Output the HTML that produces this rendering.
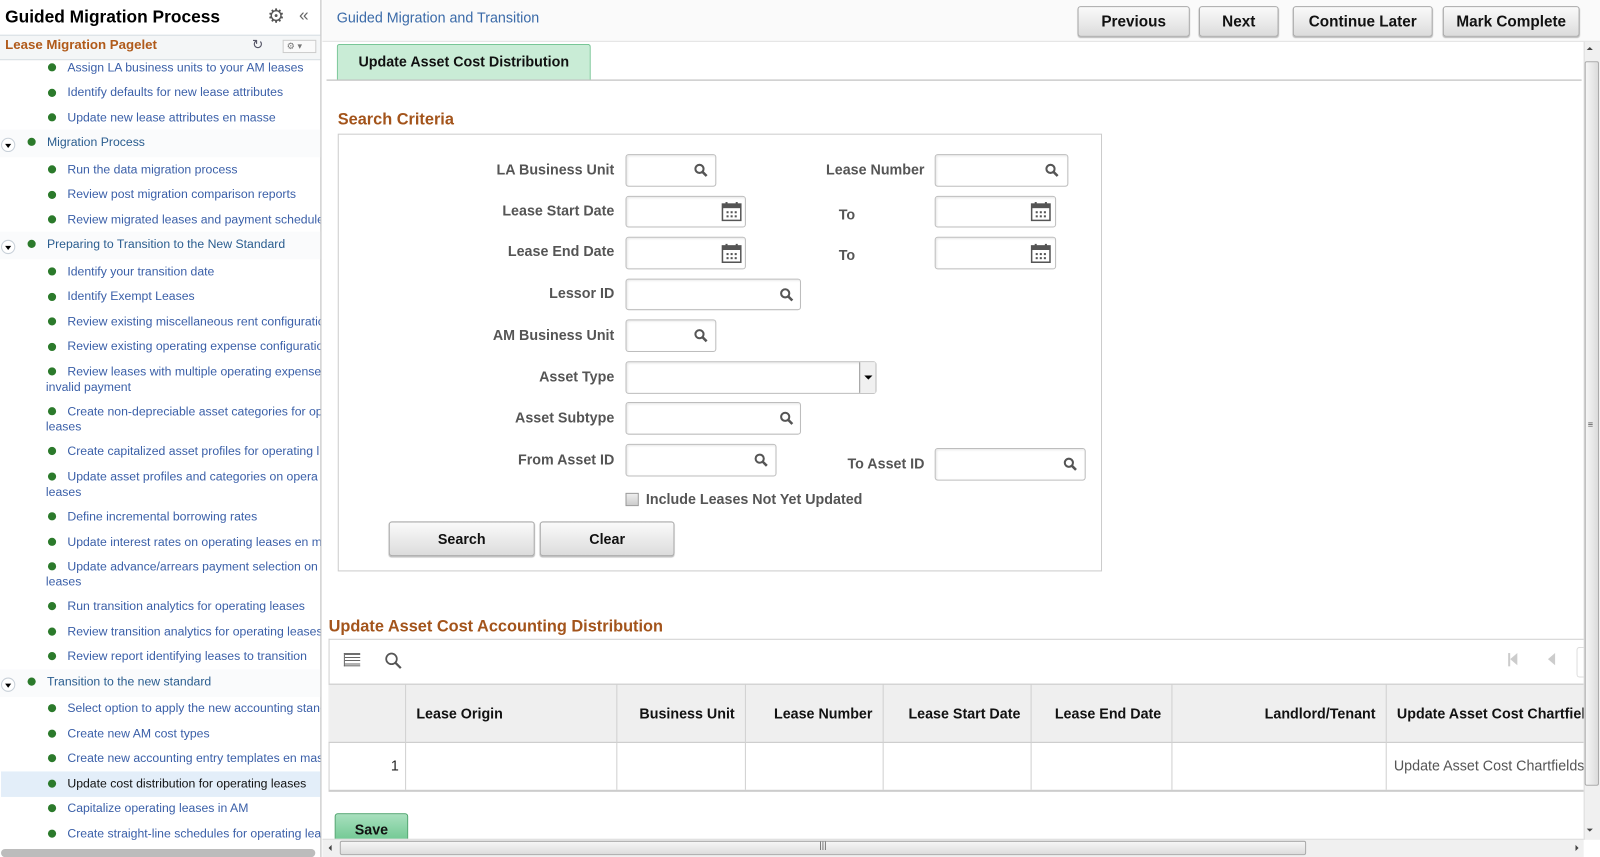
<!DOCTYPE html>
<html><head><meta charset="utf-8"><style>
*{box-sizing:border-box;margin:0;padding:0}
body{width:1600px;height:857px;overflow:hidden;background:#fff;font-family:"Liberation Sans",Arial,sans-serif;position:relative}
#w{position:absolute;left:0;top:0;width:1568px;height:840px;transform:scale(1.0204);transform-origin:0 0;overflow:hidden}
.a{position:absolute;white-space:nowrap}
.sb{position:absolute;left:0;top:0;width:315px;height:840px;border-right:1px solid #bbb;overflow:hidden;background:#fff}
.it{position:absolute;left:66px;font-size:12px;color:#3a5fa8;line-height:15px;white-space:nowrap}
.it.s{left:46px;color:#2a5d8f}
.dot{position:absolute;width:8px;height:8px;border-radius:50%;background:#2b7a2b}
.tg{position:absolute;left:1px;width:14px;height:14px;border-radius:50%;border:1px solid #c8d0d8;background:#fff}
.tg:after{content:"";position:absolute;left:3px;top:5px;border-left:3px solid transparent;border-right:3px solid transparent;border-top:4px solid #000}
.btn{position:absolute;border:1px solid #a9a9a9;border-radius:3px;background:linear-gradient(#fafafa,#dcdcdc);font-weight:bold;font-size:15px;color:#111;text-align:center;box-shadow:0 1px 1px #bbb}
.lb{position:absolute;font-weight:bold;font-size:14px;color:#555;text-align:right;white-space:nowrap}
.in{position:absolute;border:1px solid #bdbdbd;border-radius:3px;background:#fff;box-shadow:inset 1px 1px 2px #e6e6e6}
.th{position:absolute;top:671px;height:56px;line-height:56px;font-weight:bold;font-size:14px;color:#111;border-left:1px solid #d0d0d0;padding:0 10px;white-space:nowrap;overflow:hidden}
.td{position:absolute;top:727px;height:47px;border-left:1px solid #d0d0d0}
</style></head><body>
<svg width="0" height="0" style="position:absolute"><defs>
<symbol id="mg" viewBox="0 0 14 14"><circle cx="5.5" cy="5.5" r="4" fill="none" stroke="#555" stroke-width="2"/><path d="M8.5 8.5L12.5 12.5" stroke="#555" stroke-width="2.5"/></symbol>
<symbol id="cal" viewBox="0 0 20 20"><rect x="1" y="3" width="18" height="16" fill="none" stroke="#555" stroke-width="1.5"/><rect x="1" y="3" width="18" height="4" fill="#555"/><rect x="4" y="1" width="2" height="4" fill="#555"/><rect x="14" y="1" width="2" height="4" fill="#555"/><g fill="#555"><rect x="5" y="10" width="2" height="2"/><rect x="9" y="10" width="2" height="2"/><rect x="13" y="10" width="2" height="2"/><rect x="5" y="14" width="2" height="2"/><rect x="9" y="14" width="2" height="2"/><rect x="13" y="14" width="2" height="2"/></g></symbol>
</defs></svg>
<div id="w">
<div class="sb">
<div class="a" style="left:5px;top:7px;font-size:17px;font-weight:bold;color:#000">Guided Migration Process</div>
<div class="a" style="left:262px;top:5px;font-size:19px;color:#555">⚙</div>
<div class="a" style="left:293px;top:5px;font-size:17px;color:#666">«</div>
<div class="a" style="left:0;top:34px;width:314px;height:25px;background:#f4f6f7;border-top:1px solid #d6dde3;border-bottom:1px solid #d6dde3"></div>
<div class="a" style="left:5px;top:36px;font-size:13px;font-weight:bold;color:#b05a1a">Lease Migration Pagelet</div>
<div class="a" style="left:247px;top:36px;font-size:13px;color:#556">↻</div>
<div class="a" style="left:277px;top:39px;width:33px;height:13px;border:1px solid #ccc;background:#fafafa;font-size:9px;color:#777;line-height:11px;padding-left:3px">⚙ ▾</div>

<div class="dot" style="left:47px;top:62px"></div><div class="it" style="top:59px">Assign LA business units to your AM leases</div>
<div class="dot" style="left:47px;top:87px"></div><div class="it" style="top:83px">Identify defaults for new lease attributes</div>
<div class="dot" style="left:47px;top:111px"></div><div class="it" style="top:108px">Update new lease attributes en masse</div>
<div class="a" style="left:0;top:127px;width:314px;height:27px;background:#fafbfc"></div>
<div class="tg" style="top:135px"></div><div class="dot" style="left:27px;top:135px"></div><div class="it s" style="top:132px">Migration Process</div>
<div class="dot" style="left:47px;top:162px"></div><div class="it" style="top:159px">Run the data migration process</div>
<div class="dot" style="left:47px;top:187px"></div><div class="it" style="top:183px">Review post migration comparison reports</div>
<div class="dot" style="left:47px;top:211px"></div><div class="it" style="top:208px">Review migrated leases and payment schedules</div>
<div class="a" style="left:0;top:227px;width:314px;height:27px;background:#fafbfc"></div>
<div class="tg" style="top:235px"></div><div class="dot" style="left:27px;top:235px"></div><div class="it s" style="top:232px">Preparing to Transition to the New Standard</div>
<div class="dot" style="left:47px;top:262px"></div><div class="it" style="top:259px">Identify your transition date</div>
<div class="dot" style="left:47px;top:287px"></div><div class="it" style="top:283px">Identify Exempt Leases</div>
<div class="dot" style="left:47px;top:311px"></div><div class="it" style="top:308px">Review existing miscellaneous rent configuration</div>
<div class="dot" style="left:47px;top:336px"></div><div class="it" style="top:332px">Review existing operating expense configuration</div>
<div class="dot" style="left:47px;top:360px"></div><div class="it" style="top:357px">Review leases with multiple operating expenses</div><div class="it" style="left:45px;top:372px">invalid payment</div>
<div class="dot" style="left:47px;top:399px"></div><div class="it" style="top:396px">Create non-depreciable asset categories for op</div><div class="it" style="left:45px;top:411px">leases</div>
<div class="dot" style="left:47px;top:438px"></div><div class="it" style="top:435px">Create capitalized asset profiles for operating l</div>
<div class="dot" style="left:47px;top:463px"></div><div class="it" style="top:460px">Update asset profiles and categories on opera</div><div class="it" style="left:45px;top:475px">leases</div>
<div class="dot" style="left:47px;top:502px"></div><div class="it" style="top:499px">Define incremental borrowing rates</div>
<div class="dot" style="left:47px;top:527px"></div><div class="it" style="top:524px">Update interest rates on operating leases en m</div>
<div class="dot" style="left:47px;top:551px"></div><div class="it" style="top:548px">Update advance/arrears payment selection on</div><div class="it" style="left:45px;top:563px">leases</div>
<div class="dot" style="left:47px;top:590px"></div><div class="it" style="top:587px">Run transition analytics for operating leases</div>
<div class="dot" style="left:47px;top:615px"></div><div class="it" style="top:612px">Review transition analytics for operating leases</div>
<div class="dot" style="left:47px;top:639px"></div><div class="it" style="top:636px">Review report identifying leases to transition</div>
<div class="a" style="left:0;top:656px;width:314px;height:27px;background:#fafbfc"></div>
<div class="tg" style="top:664px"></div><div class="dot" style="left:27px;top:664px"></div><div class="it s" style="top:661px">Transition to the new standard</div>
<div class="dot" style="left:47px;top:690px"></div><div class="it" style="top:687px">Select option to apply the new accounting standard</div>
<div class="dot" style="left:47px;top:715px"></div><div class="it" style="top:712px">Create new AM cost types</div>
<div class="dot" style="left:47px;top:739px"></div><div class="it" style="top:736px">Create new accounting entry templates en masse</div>
<div class="a" style="left:1px;top:756px;width:313px;height:25px;background:#e3eef9"></div>
<div class="dot" style="left:47px;top:764px"></div><div class="it" style="top:761px;color:#111">Update cost distribution for operating leases</div>
<div class="dot" style="left:47px;top:788px"></div><div class="it" style="top:785px">Capitalize operating leases in AM</div>
<div class="dot" style="left:47px;top:813px"></div><div class="it" style="top:810px">Create straight-line schedules for operating leases</div>
<div class="a" style="left:1px;top:832px;width:308px;height:8px;border-radius:4px;background:#bcbcbc"></div>
</div>

<div class="a" style="left:316px;top:0;width:1252px;height:41px;background:#fafafa;border-bottom:1px solid #e2e2e2"></div>
<div class="a" style="left:330px;top:9px;font-size:14px;color:#3a6aa8">Guided Migration and Transition</div>
<div class="btn" style="left:1056px;top:6px;width:110px;height:30px;line-height:29px">Previous</div>
<div class="btn" style="left:1175px;top:6px;width:78px;height:30px;line-height:29px">Next</div>
<div class="btn" style="left:1267px;top:6px;width:137px;height:30px;line-height:29px">Continue Later</div>
<div class="btn" style="left:1414px;top:6px;width:134px;height:30px;line-height:29px">Mark Complete</div>

<div class="a" style="left:330px;top:43px;width:249px;height:35px;background:#c9ecd6;border:1px solid #6cc08d;border-bottom:none;border-radius:3px 3px 0 0;text-align:center;line-height:33px;font-weight:bold;font-size:14px;color:#111">Update Asset Cost Distribution</div>
<div class="a" style="left:320px;top:78px;width:1230px;height:1px;background:#b5b5b5"></div>

<div class="a" style="left:331px;top:109px;font-size:16px;font-weight:bold;color:#a3541b">Search Criteria</div>
<div class="a" style="left:331px;top:131px;width:749px;height:429px;border:1px solid #ccc"></div>

<div class="lb" style="right:966px;top:158px">LA Business Unit</div>
<div class="in" style="left:613px;top:151px;width:89px;height:32px"><svg class="a" style="left:66px;top:8px" width="14" height="14"><use href="#mg"/></svg></div>
<div class="lb" style="right:966px;top:198px">Lease Start Date</div>
<div class="in" style="left:613px;top:192px;width:118px;height:31px"><svg class="a" style="left:93px;top:4px" width="20" height="20"><use href="#cal"/></svg></div>
<div class="lb" style="right:966px;top:238px">Lease End Date</div>
<div class="in" style="left:613px;top:232px;width:118px;height:32px"><svg class="a" style="left:93px;top:5px" width="20" height="20"><use href="#cal"/></svg></div>
<div class="lb" style="right:966px;top:279px">Lessor ID</div>
<div class="in" style="left:613px;top:273px;width:172px;height:31px"><svg class="a" style="left:150px;top:8px" width="14" height="14"><use href="#mg"/></svg></div>
<div class="lb" style="right:966px;top:320px">AM Business Unit</div>
<div class="in" style="left:613px;top:313px;width:89px;height:32px"><svg class="a" style="left:66px;top:8px" width="14" height="14"><use href="#mg"/></svg></div>
<div class="lb" style="right:966px;top:361px">Asset Type</div>
<div class="in" style="left:613px;top:354px;width:246px;height:32px"><div class="a" style="right:0;top:0;width:16px;height:30px;border-left:1px solid #999;background:#f0f0f0"><div class="a" style="left:4px;top:13px;border-left:4px solid transparent;border-right:4px solid transparent;border-top:4px solid #000"></div></div></div>
<div class="lb" style="right:966px;top:401px">Asset Subtype</div>
<div class="in" style="left:613px;top:394px;width:172px;height:32px"><svg class="a" style="left:150px;top:8px" width="14" height="14"><use href="#mg"/></svg></div>
<div class="lb" style="right:966px;top:442px">From Asset ID</div>
<div class="in" style="left:613px;top:435px;width:148px;height:32px"><svg class="a" style="left:125px;top:8px" width="14" height="14"><use href="#mg"/></svg></div>

<div class="lb" style="right:662px;top:158px">Lease Number</div>
<div class="in" style="left:916px;top:151px;width:131px;height:32px"><svg class="a" style="left:107px;top:8px" width="14" height="14"><use href="#mg"/></svg></div>
<div class="lb" style="left:822px;top:202px">To</div>
<div class="in" style="left:916px;top:192px;width:119px;height:31px"><svg class="a" style="left:93px;top:4px" width="20" height="20"><use href="#cal"/></svg></div>
<div class="lb" style="left:822px;top:242px">To</div>
<div class="in" style="left:916px;top:232px;width:119px;height:32px"><svg class="a" style="left:93px;top:5px" width="20" height="20"><use href="#cal"/></svg></div>
<div class="lb" style="right:662px;top:446px">To Asset ID</div>
<div class="in" style="left:916px;top:439px;width:148px;height:32px"><svg class="a" style="left:125px;top:8px" width="14" height="14"><use href="#mg"/></svg></div>

<div class="a" style="left:613px;top:483px;width:13px;height:13px;border:1px solid #999;background:linear-gradient(#eee,#ccc)"></div>
<div class="lb" style="left:633px;top:481px">Include Leases Not Yet Updated</div>
<div class="btn" style="left:381px;top:511px;width:143px;height:34px;line-height:33px;font-size:14px">Search</div>
<div class="btn" style="left:529px;top:511px;width:132px;height:34px;line-height:33px;font-size:14px">Clear</div>

<div class="a" style="left:322px;top:606px;font-size:16px;font-weight:bold;color:#a3541b">Update Asset Cost Accounting Distribution</div>
<div class="a" style="left:322px;top:626px;width:1232px;height:150px;border:1px solid #d0d0d0;border-right:none;border-bottom:2px solid #ccc"></div>
<div class="a" style="left:337px;top:640px;width:16px;height:13px;border:1px solid #666;border-right:none;background:repeating-linear-gradient(#666 0 1px,#fff 1px 3px)"></div>
<svg class="a" style="left:377px;top:639px" width="17" height="17" viewBox="0 0 14 14"><circle cx="5.5" cy="5.5" r="4.3" fill="none" stroke="#555" stroke-width="1.4"/><path d="M8.5 8.5L13 13" stroke="#555" stroke-width="1.8"/></svg>
<div class="a" style="left:1478px;top:640px;width:2px;height:13px;background:#ccc"></div>
<div class="a" style="left:1480px;top:640px;border-top:6px solid transparent;border-bottom:6px solid transparent;border-right:7px solid #ccc"></div>
<div class="a" style="left:1517px;top:640px;border-top:6px solid transparent;border-bottom:6px solid transparent;border-right:7px solid #ccc"></div>
<div class="a" style="left:1545px;top:634px;width:8px;height:30px;border:1px solid #ddd;border-right:none;border-radius:3px 0 0 3px"></div>
<div class="a" style="left:322px;top:670px;width:1230px;height:58px;background:#efefef;border-top:1px solid #c8c8c8;border-bottom:1px solid #c8c8c8"></div>
<div class="th" style="left:397px;width:207px">Lease Origin</div>
<div class="th" style="left:604px;width:126px;text-align:right">Business Unit</div>
<div class="th" style="left:730px;width:135px;text-align:right">Lease Number</div>
<div class="th" style="left:865px;width:145px;text-align:right">Lease Start Date</div>
<div class="th" style="left:1010px;width:138px;text-align:right">Lease End Date</div>
<div class="th" style="left:1148px;width:210px;text-align:right">Landlord/Tenant</div>
<div class="th" style="left:1358px;width:194px;padding-right:0">Update Asset Cost Chartfields</div>
<div class="a" style="left:383px;top:742px;font-size:14px;color:#222">1</div>
<div class="td" style="left:397px"></div><div class="td" style="left:604px"></div><div class="td" style="left:730px"></div><div class="td" style="left:865px"></div><div class="td" style="left:1010px"></div><div class="td" style="left:1148px"></div><div class="td" style="left:1358px"></div>
<div class="a" style="left:1366px;top:742px;width:186px;overflow:hidden;font-size:14px;color:#555">Update Asset Cost Chartfields</div>

<div class="a" style="left:328px;top:797px;width:72px;height:30px;border:1px solid #4aa26a;border-radius:3px;background:linear-gradient(#a8e0be,#6cc68f);text-align:center;line-height:30px;font-weight:bold;font-size:14px;color:#111">Save</div>

<div class="a" style="left:1552px;top:41px;width:16px;height:782px;background:#f0f0f0;border-left:1px solid #ddd"></div>
<div class="a" style="left:1555px;top:46px;border-left:3px solid transparent;border-right:3px solid transparent;border-bottom:3px solid #444"></div>
<div class="a" style="left:1553px;top:60px;width:14px;height:710px;border:1px solid #aaa;border-radius:2px;background:linear-gradient(90deg,#f6f6f6,#dcdcdc)"></div>
<div class="a" style="left:1556px;top:411px;font-size:9px;color:#555">≡</div>
<div class="a" style="left:1555px;top:812px;border-left:3px solid transparent;border-right:3px solid transparent;border-top:3px solid #444"></div>
<div class="a" style="left:316px;top:822px;width:1236px;height:18px;background:#f0f0f0;border-top:1px solid #ddd"></div>
<div class="a" style="left:322px;top:828px;border-top:3px solid transparent;border-bottom:3px solid transparent;border-right:3px solid #444"></div>
<div class="a" style="left:333px;top:824px;width:947px;height:14px;border:1px solid #aaa;border-radius:2px;background:linear-gradient(#f6f6f6,#dcdcdc)"></div>
<div class="a" style="left:803px;top:823px;font-size:9px;color:#555">|||</div>
<div class="a" style="left:1544px;top:828px;border-top:3px solid transparent;border-bottom:3px solid transparent;border-left:3px solid #444"></div>
</div>
</body></html>
